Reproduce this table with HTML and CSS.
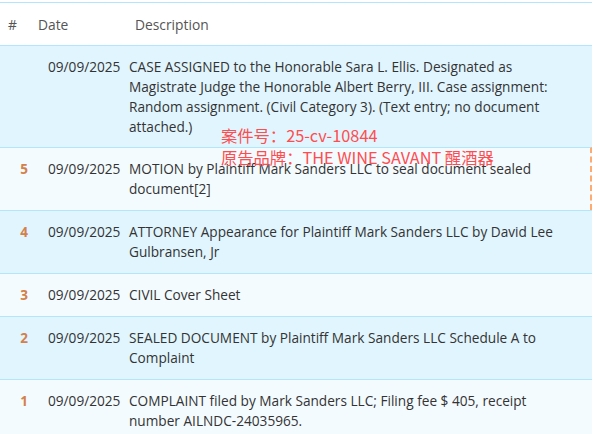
FILE: index.html
```html
<!DOCTYPE html>
<html lang="en">
<head>
<meta charset="utf-8">
<link rel="stylesheet" href="styles.css">
</head>
<body>
<div class="docket">
  <div class="head">
    <span class="h-num">#</span>
    <span class="h-date">Date</span>
    <span class="h-desc">Description</span>
  </div>
  <div class="rows">
    <div class="row tint first">
      <div class="num"></div>
      <div class="date">09/09/2025</div>
      <div class="desc">CASE ASSIGNED to the Honorable Sara L. Ellis. Designated as Magistrate Judge the Honorable Albert Berry, III. Case assignment: Random assignment. (Civil Category 3). (Text entry; no document attached.)</div>
    </div>
    <div class="row light marked">
      <div class="num">5</div>
      <div class="date">09/09/2025</div>
      <div class="desc">MOTION by Plaintiff Mark Sanders LLC to seal document sealed document[2]</div>
    </div>
    <div class="row tint">
      <div class="num">4</div>
      <div class="date">09/09/2025</div>
      <div class="desc">ATTORNEY Appearance for Plaintiff Mark Sanders LLC by David Lee Gulbransen, Jr</div>
    </div>
    <div class="row light">
      <div class="num">3</div>
      <div class="date">09/09/2025</div>
      <div class="desc">CIVIL Cover Sheet</div>
    </div>
    <div class="row tint">
      <div class="num">2</div>
      <div class="date">09/09/2025</div>
      <div class="desc">SEALED DOCUMENT by Plaintiff Mark Sanders LLC Schedule A to Complaint</div>
    </div>
    <div class="row light">
      <div class="num">1</div>
      <div class="date">09/09/2025</div>
      <div class="desc">COMPLAINT filed by Mark Sanders LLC; Filing fee $ 405, receipt number AILNDC-24035965.</div>
    </div>
  </div>
  <div class="stamp">
    <div>案件号：25-cv-10844</div>
    <div>原告品牌：THE WINE SAVANT 醒酒器</div>
  </div>
</div>
</body>
</html>
```

FILE: styles.css
```css
html, body {
  margin: 0;
  padding: 0;
  background: #ffffff;
}

body {
  font-family: "Open Sans", "Noto Sans", "Noto Sans CJK SC", sans-serif;
  color: #333333;
  overflow: hidden;
}

.docket {
  position: relative;
  width: 592px;
  padding-top: 2px;
}

.head {
  display: flex;
  align-items: center;
  height: 42px;
  border-top: 1px solid #b3e5fc;
  font-size: 13.8px;
  color: #555555;
}

.h-num {
  width: 38px;
  padding-left: 8px;
  box-sizing: border-box;
}

.h-date {
  width: 97px;
}

.h-desc {
  flex: 1;
}

.row {
  display: grid;
  grid-template-columns: 48px 81px 1fr;
  border-top: 1px solid #b3e5fc;
  padding: 11px 0;
  font-size: 13.65px;
  line-height: 20px;
}

.row.first {
  padding-bottom: 10px;
}

.tint {
  background: #e1f5fe;
}

.light {
  background: #f3fbff;
}

.marked {
  border-right: 2px dashed #ffab70;
}

.num {
  text-align: center;
  font-weight: 700;
  color: #d4804a;
  font-size: 13.5px;
}

.desc {
  padding-right: 28px;
}

.stamp {
  position: absolute;
  left: 221px;
  top: 124px;
  font-family: "Noto Sans CJK SC", "Noto Sans", sans-serif;
  font-size: 16.3px;
  line-height: 22px;
  color: #ff4d4f;
  pointer-events: none;
}
```
